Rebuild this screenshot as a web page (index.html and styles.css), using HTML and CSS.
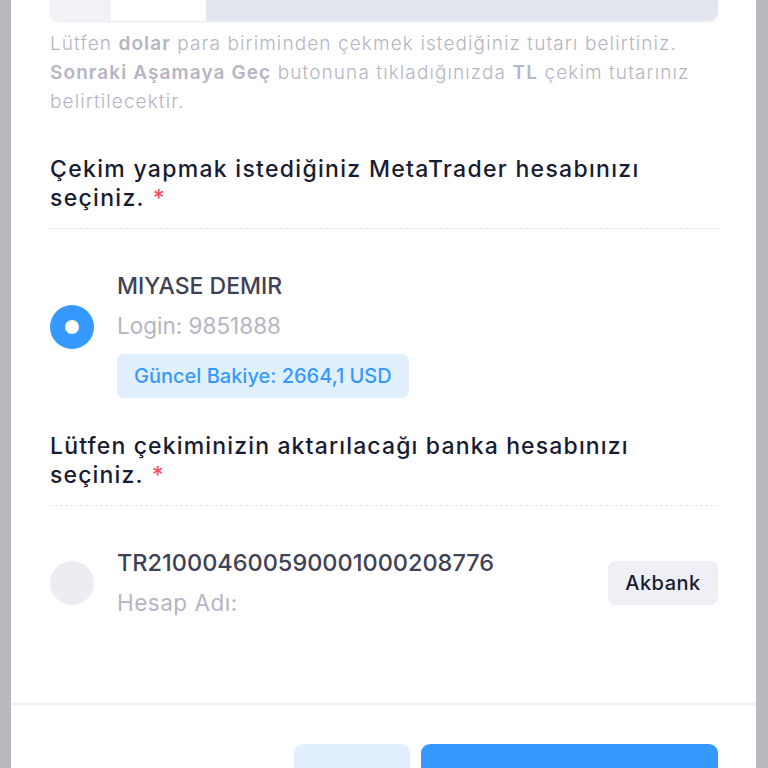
FILE: index.html
```html
<!DOCTYPE html>
<html lang="tr">
<head>
<meta charset="utf-8">
<title>Para Çekme</title>
<link rel="stylesheet" href="styles.css">
</head>
<body>
<div class="modal">
  <div class="modal-body">
    <div class="amount-group">
      <div class="amount-prefix"></div>
      <div class="amount-input"></div>
      <div class="amount-suffix"></div>
    </div>
    <p class="hint">Lütfen <b>dolar</b> para biriminden çekmek istediğiniz tutarı belirtiniz. <b>Sonraki Aşamaya Geç</b> butonuna tıkladığınızda <b>TL</b> çekim tutarınız belirtilecektir.</p>

    <h3 class="section-title">Çekim yapmak istediğiniz MetaTrader hesabınızı seçiniz.<span class="req">*</span></h3>
    <div class="divider"></div>
    <div class="option option-account">
      <span class="radio radio-on"></span>
      <div class="option-text">
        <div class="option-title">MIYASE DEMIR</div>
        <div class="option-sub">Login: 9851888</div>
        <div class="balance">Güncel Bakiye: 2664,1 USD</div>
      </div>
    </div>

    <h3 class="section-title section-bank">Lütfen çekiminizin aktarılacağı banka hesabınızı seçiniz.<span class="req">*</span></h3>
    <div class="divider"></div>
    <div class="option option-bank">
      <span class="radio"></span>
      <div class="option-text">
        <div class="option-title iban">TR210004600590001000208776</div>
        <div class="option-sub">Hesap Adı:</div>
      </div>
      <span class="bank-tag">Akbank</span>
    </div>
  </div>
  <div class="modal-footer">
    <button class="btn btn-light">Geri</button>
    <button class="btn btn-primary">Sonraki Aşamaya Geç</button>
  </div>
</div>
</body>
</html>
```

FILE: styles.css
```css
* { box-sizing: border-box; }

html, body {
  margin: 0;
  height: 100%;
}

body {
  background: #b8b9bf;
  font-family: "Inter", "Noto Sans", sans-serif;
  overflow: hidden;
}

.modal {
  margin: 0 12px 0 11px;
  background: #ffffff;
  min-height: 100%;
}

.modal-body {
  padding: 0 38px 0 39px;
  height: 703px;
}

/* amount input group, scrolled so only its lower part shows */
.amount-group {
  display: flex;
  height: 21px;
  border-radius: 0 0 9px 9px;
  overflow: hidden;
  box-shadow: 0 1px 2px rgba(60, 64, 90, 0.12);
}
.amount-prefix { width: 61px; background: #f1f2f6; }
.amount-input { width: 95px; background: #ffffff; }
.amount-suffix { flex: 1; background: #e4e6ef; }

.hint {
  margin: 8px 0 0;
  font-size: 19px;
  line-height: 29px;
  letter-spacing: 1.1px;
  color: #b5b5c3;
  font-weight: 300;
}
.hint b { font-weight: 600; }

.section-title {
  margin: 39px 0 0;
  font-size: 23px;
  line-height: 29px;
  letter-spacing: 1.3px;
  font-weight: 500;
  color: #181c32;
  padding-right: 60px;
}
.section-bank { margin-top: 34px; letter-spacing: 1.15px; }

.req {
  color: #f64e60;
  margin-left: 8px;
}

.divider {
  margin-top: 15px;
  border-top: 1px dashed #e4e6ef;
}

.option {
  display: flex;
  align-items: flex-start;
  gap: 23px;
}
.option-account { margin-top: 43px; }
.option-bank { margin-top: 42px; align-items: center; }

.radio {
  flex: none;
  width: 44px;
  height: 44px;
  border-radius: 50%;
  background: #ebedf3;
}
.option-account .radio { margin-top: 33px; }
.radio-on {
  background: #3699ff;
  display: flex;
  align-items: center;
  justify-content: center;
}
.radio-on::after {
  content: "";
  width: 14px;
  height: 14px;
  border-radius: 50%;
  background: #ffffff;
}

.option-text {
  flex: 1;
  display: flex;
  flex-direction: column;
  align-items: flex-start;
}

.option-title {
  font-size: 23px;
  line-height: 29px;
  font-weight: 500;
  color: #3f4254;
}
.iban { font-size: 23.5px; }

.option-sub {
  margin-top: 10px;
  font-size: 22.5px;
  line-height: 29px;
  color: #b5b5c3;
}
.option-bank .option-sub { margin-top: 11px; letter-spacing: 0.5px; }

.balance {
  margin-top: 14px;
  height: 44px;
  padding: 0 17px;
  display: flex;
  align-items: center;
  border-radius: 7px;
  background: #e1f0ff;
  color: #3699ff;
  font-size: 20px;
  font-weight: 500;
}

.bank-tag {
  flex: none;
  height: 44px;
  width: 110px;
  display: flex;
  align-items: center;
  justify-content: center;
  border-radius: 7px;
  background: #eef0f6;
  color: #181c32;
  font-size: 20px;
  letter-spacing: 0.5px;
  font-weight: 500;
}

.modal-footer {
  border-top: 2px solid #eff1f5;
  padding: 39px 38px 30px 39px;
  display: flex;
  justify-content: flex-end;
  gap: 11px;
}

.btn {
  height: 80px;
  border: 0;
  border-radius: 9px;
  font-family: inherit;
  font-size: 18px;
  padding: 34px 0 0;
}
.btn-light {
  width: 116px;
  background: #e1f0ff;
  color: #3699ff;
}
.btn-primary {
  width: 297px;
  background: #3699ff;
  color: #ffffff;
}
```
